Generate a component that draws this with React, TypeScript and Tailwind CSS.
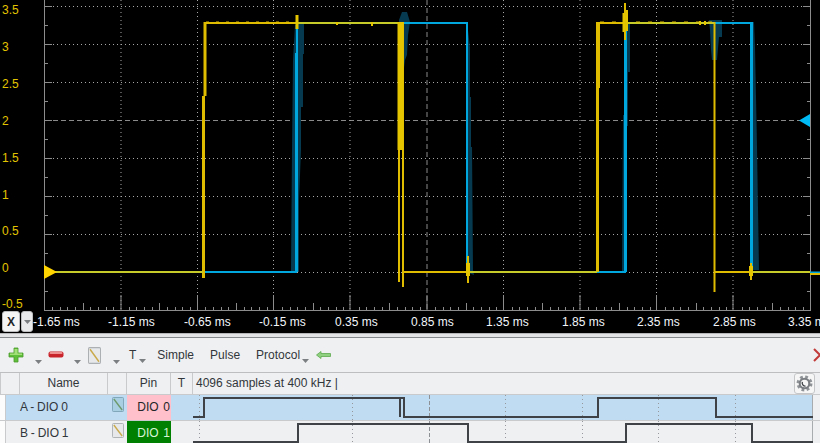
const gridX = [44.5, 121, 197.5, 273.5, 350, 427, 503.5, 580, 656.5, 733, 810.5];
const gridY = [6, 44, 82, 120, 158, 196, 234, 272, 310];

const xLabels = [
  ['-1.65 ms', 33],
  ['-1.15 ms', 108],
  ['-0.65 ms', 184],
  ['-0.15 ms', 259],
  ['0.35 ms', 335],
  ['0.85 ms', 411],
  ['1.35 ms', 486],
  ['1.85 ms', 562],
  ['2.35 ms', 637],
  ['2.85 ms', 713],
  ['3.35 ms', 788],
] as const;

const yLabels = [
  ['3.5', 14],
  ['3', 51],
  ['2.5', 88],
  ['2', 125],
  ['1.5', 162],
  ['1', 199],
  ['0.5', 235],
  ['0', 272],
  ['-0.5', 308],
] as const;

const ghosts = [
  '295,25 304,22 304,54 303,54 303,107 301,107 301,150 299,200 299,272 291,272 292,150 293,60',
  '399,20 402,12 407,12 410,22 408,35 407,55 405,60 404,68 400,68',
  '467,22 470,47 470,97 471,97 471,147 472,147 473,270 474,275 466,272',
  '626,22 630,22 630,72 628,72 628,126 627,126 627,272 622,272 623,115 624,115',
  '709,20 722,20 722,37 719,37 717,60 712,60 711,50 710,30',
  '750,22 754,22 755,47 756,97 757,147 759,270 750,270',
];

// x1, y1, x2, y2, width
const blueLines = [
  [203, 272, 297, 272, 2],
  [296.5, 272, 296.5, 53, 3],
  [297, 53, 297, 23, 2],
  [296, 23, 467, 23, 2],
  [467, 22, 467, 272, 2],
  [597, 272, 626, 272, 2],
  [625.5, 272, 625.5, 22, 3],
  [625, 23, 752, 23, 2],
  [751.5, 22, 751.5, 272, 3],
  [810, 272.5, 820, 272.5, 2],
];

const yellowLines = [
  [205, 22, 205, 96, 3],
  [203.5, 96, 203.5, 278, 3],
  [204, 23, 296, 23, 2],
  [399, 22, 399, 282, 2],
  [403, 22, 403, 287, 2],
  [403, 272, 468, 272, 2],
  [468, 256, 468, 283, 2],
  [597.5, 22, 597.5, 272, 3],
  [599, 22, 599, 88, 2],
  [597, 23, 625, 23, 2],
  [625, 3, 625, 40, 2],
  [714.5, 22, 714.5, 292, 2],
  [715, 272, 751, 272, 2],
  [751, 263, 751, 280, 2],
  [810, 274, 820, 274, 2],
];

const olive = [
  [44, 272, 203, 272],
  [298, 23, 398, 23],
  [468, 272, 597, 272],
  [628, 23, 714, 23],
  [751, 272, 810, 272],
];

const glitches = [
  [297, 15, 297, 29, 3],
  [337, 22, 337, 25, 2],
  [372, 22, 372, 26, 2],
  [624, 13, 624, 32, 3],
  [627, 10, 627, 31, 2],
  [468, 263, 468, 276, 4],
  [751, 266, 751, 276, 4],
  [400.5, 22, 400.5, 150, 6],
  [700, 21, 700, 25, 2],
  [705, 21, 705, 25, 2],
];

function Plot() {
  const minorX: number[] = [];
  for (let i = 0; i < 10; i++) {
    for (let j = 1; j < 10; j++) minorX.push(44.5 + i * 76.6 + (j * 76.6) / 10);
  }
  const minorY: number[] = [];
  for (let y = 25; y < 310; y += 38) minorY.push(y);

  return (
    <svg width="820" height="333" className="block">
      {gridY.slice(0, 8).map(y =>
        y === 120 ? (
          <line key={y} x1="45" y1={y + 0.5} x2="810" y2={y + 0.5} stroke="#8a8a8a" strokeDasharray="5 3" />
        ) : (
          <line key={y} x1="45" y1={y + 0.5} x2="810" y2={y + 0.5} stroke="#a8a8a8" strokeDasharray="1 3" />
        ),
      )}
      {gridX.slice(1, 10).map(x =>
        x === 427 ? (
          <line key={x} x1={x} y1="0" x2={x} y2="310" stroke="#8a8a8a" strokeDasharray="5 3" />
        ) : (
          <line key={x} x1={x} y1="0" x2={x} y2="310" stroke="#a8a8a8" strokeDasharray="1 3" />
        ),
      )}

      <line x1="44.5" y1="0" x2="44.5" y2="311" stroke="#8c8c8c" />
      <line x1="810.5" y1="0" x2="810.5" y2="311" stroke="#8c8c8c" />
      <line x1="44" y1="310.5" x2="811" y2="310.5" stroke="#8c8c8c" />
      {gridY.map(y => (
        <g key={y} stroke="#8c8c8c">
          <line x1="45" y1={y + 0.5} x2="52" y2={y + 0.5} />
          <line x1="803" y1={y + 0.5} x2="810" y2={y + 0.5} />
        </g>
      ))}
      {minorY.map(y => (
        <g key={y} stroke="#8c8c8c">
          <line x1="45" y1={y + 0.5} x2="48" y2={y + 0.5} />
          <line x1="807" y1={y + 0.5} x2="810" y2={y + 0.5} />
        </g>
      ))}
      {gridX.map(x => (
        <line key={x} x1={x} y1="295" x2={x} y2="310" stroke="#8c8c8c" />
      ))}
      {minorX.map((x, i) => (
        <line
          key={i}
          x1={Math.round(x) + 0.5}
          y1={i % 9 === 4 ? 303 : 307}
          x2={Math.round(x) + 0.5}
          y2="310"
          stroke="#8c8c8c"
        />
      ))}

      {ghosts.map((p, i) => (
        <polygon key={i} points={p} fill="#053a50" />
      ))}
      {blueLines.map((l, i) => (
        <line key={i} x1={l[0]} y1={l[1]} x2={l[2]} y2={l[3]} stroke="#00a6de" strokeWidth={l[4]} />
      ))}
      {yellowLines.map((l, i) => (
        <line key={i} x1={l[0]} y1={l[1]} x2={l[2]} y2={l[3]} stroke="#dfbc00" strokeWidth={l[4]} />
      ))}
      {olive.map((l, i) => (
        <line key={i} x1={l[0]} y1={l[1]} x2={l[2]} y2={l[3]} stroke="#c6cb2a" strokeWidth="2" />
      ))}
      <line x1="206" y1="22" x2="296" y2="22" stroke="#dfbc00" strokeDasharray="3 7" />
      <line x1="600" y1="22" x2="714" y2="22" stroke="#dfbc00" strokeDasharray="4 8" />
      {glitches.map((l, i) => (
        <line key={i} x1={l[0]} y1={l[1]} x2={l[2]} y2={l[3]} stroke="#e5c400" strokeWidth={l[4]} />
      ))}

      <polygon points="44,265 57,272 44,279" fill="#ffd400" />
      <polygon points="810,114 799,120.5 810,127" fill="#00baf5" />

      {yLabels.map(([t, y]) => (
        <text key={t} x="2" y={y} fontSize="12" fill="#e3c400">
          {t}
        </text>
      ))}
      {xLabels.map(([t, x]) => (
        <text key={t} x={x} y="326" fontSize="12" fill="#f2f6fa">
          {t}
        </text>
      ))}
    </svg>
  );
}

function MenuArrow({ className = '' }: { className?: string }) {
  return (
    <svg width="7" height="4" viewBox="0 0 7 4" className={className}>
      <polygon points="0,0 7,0 3.5,4" fill="#7c7f82" />
    </svg>
  );
}

function PlusIcon() {
  return (
    <svg width="16" height="16" viewBox="0 0 16 16">
      <path d="M6 1h4v5h5v4h-5v5H6v-5H1V6h5z" fill="#5fbf3a" stroke="#4a9a2c" strokeWidth="0.8" />
      <path d="M6.5 2h3v4.500h4.500v1.500H2V6.500h4.500z" fill="#a4e07a" />
    </svg>
  );
}

function MinusIcon() {
  return (
    <svg width="16" height="7" viewBox="0 0 16 7">
      <rect x="0.500" y="0.500" width="15" height="6" rx="2" fill="#c9242b" />
      <rect x="1.500" y="1" width="13" height="2" rx="1" fill="#ee8f8f" />
    </svg>
  );
}

function RulerIcon({ tint = false, size = 13, tall = 15 }: { tint?: boolean; size?: number; tall?: number }) {
  return (
    <svg width={size} height={tall} viewBox="0 0 13 15" preserveAspectRatio="none">
      <rect
        x="0.500"
        y="0.500"
        width="12"
        height="14"
        rx="1"
        fill={tint ? '#a9cfe2' : '#e6e8ea'}
        stroke={tint ? '#7fa4b8' : '#adb0b3'}
      />
      <line x1="2" y1="2" x2="11" y2="13" stroke={tint ? '#6d9a6a' : '#c9a94a'} strokeWidth="1.500" />
    </svg>
  );
}

function GearIcon() {
  return (
    <svg width="17" height="17" viewBox="0 0 16 16">
      <circle cx="8" cy="8" r="6" fill="none" stroke="#8f9397" strokeWidth="3" strokeDasharray="2.500 2.200" />
      <circle cx="8" cy="8" r="4.500" fill="none" stroke="#7b7f83" strokeWidth="2" />
      <path d="M6 6.500a3 3 0 0 0 3 4" fill="none" stroke="#3d4145" strokeWidth="1.200" />
    </svg>
  );
}

const waveGrid = [199, 352, 429, 505, 582, 658, 735];

function Wave({ points, height }: { points: string; height: number }) {
  return (
    <svg width="620" height={height} className="block shrink-0">
      {waveGrid.map(x => (
        <line
          key={x}
          x1={x - 193 + 0.5}
          y1="0"
          x2={x - 193 + 0.5}
          y2={height}
          stroke={x === 429 ? '#8d9094' : '#94979b'}
          strokeDasharray={x === 429 ? '4 2' : '1 3'}
        />
      ))}
      <polyline points={points} fill="none" stroke="#3f4347" strokeWidth="2" />
    </svg>
  );
}

function SignalRow({
  name,
  pin,
  pinClass,
  rowClass,
  tint,
  height,
  points,
}: {
  name: string;
  pin: string;
  pinClass: string;
  rowClass: string;
  tint?: boolean;
  height: number;
  points: string;
}) {
  return (
    <div className="flex border-b border-[#c8cacc]" style={{ height: height + 1 }}>
      <div className="w-[5px] shrink-0 bg-[#fcfcfc]" />
      <div className={`flex w-[808px] shrink-0 border-r border-[#a9acaf] ${rowClass}`}>
        <div className="w-[15px] shrink-0 border-l border-[#c8cacc]" />
        <div className="w-[88px] shrink-0 leading-[24px] [word-spacing:-0.5px]">{name}</div>
        <div className="w-[19px] shrink-0 pl-[4px] pt-[2px]">
          <RulerIcon tint={tint} size={12} tall={15} />
        </div>
        <div className={`w-[44px] shrink-0 whitespace-pre pr-px text-right leading-[25px] [word-spacing:-1px] ${pinClass}`}>
          {pin}
        </div>
        <div className="w-[22px] shrink-0" />
        <Wave points={points} height={height} />
      </div>
    </div>
  );
}

export default function App() {
  return (
    <div className="h-[443px] w-[820px] overflow-hidden bg-[#eff0f1] font-['Liberation_Sans',sans-serif] text-[12px] text-[#31363b]">
      <div className="relative h-[333px] bg-black">
        <Plot />
        <div className="absolute bottom-px left-[2px] flex h-[21px]">
          <div className="flex w-[18px] items-center justify-center rounded-[3px] border border-[#bdbfc1] bg-[#f5f5f5] text-[12px] font-bold text-[#232629]">
            X
          </div>
          <div className="ml-px flex w-[12px] items-center justify-center rounded-[3px] border border-[#bdbfc1] bg-[#e9eaeb]">
            <MenuArrow />
          </div>
        </div>
      </div>

      <div className="h-[5px] border-t border-[#b5b7b9] border-b border-b-[#85888b] bg-[#e3e4e5]" />

      <div className="relative flex h-[35px] items-center border-b border-[#bcbec0] pl-[8px]">
        <PlusIcon />
        <MenuArrow className="ml-[11px] mt-[13px]" />
        <div className="ml-[6px] -mt-px">
          <MinusIcon />
        </div>
        <MenuArrow className="ml-[10px] mt-[13px]" />
        <div className="ml-[7px]">
          <RulerIcon size={13} tall={17} />
        </div>
        <MenuArrow className="ml-[12px] mt-[13px]" />
        <span className="ml-[9px]">T</span>
        <MenuArrow className="ml-[3px] mt-[11px]" />
        <span className="ml-[11px]">Simple</span>
        <span className="ml-[16px]">Pulse</span>
        <span className="ml-[16px]">Protocol</span>
        <MenuArrow className="ml-[2px] mt-[11px]" />
        <svg width="15" height="8" viewBox="0 0 15 8" className="ml-[7px]">
          <path d="M0.500 4L5 0.500v2h9.500v3H5v2z" fill="#8fd080" stroke="#5ca84e" strokeWidth="0.800" />
        </svg>
        <svg width="8" height="14" viewBox="0 0 8 14" className="absolute left-[813px] top-[10px]">
          <path d="M1 1l6 6M1 13l6-6" stroke="#c23b3b" strokeWidth="2" fill="none" />
        </svg>
      </div>

      <div className="flex h-[22px] border-b border-[#c8cacc] leading-[21px]">
        <div className="w-[20px] shrink-0 border-x border-[#c8cacc] bg-[#eff0f1]" />
        <div className="w-[88px] shrink-0 border-r border-[#c8cacc] text-center">Name</div>
        <div className="w-[19px] shrink-0 border-r border-[#c8cacc]" />
        <div className="w-[44px] shrink-0 border-r border-[#c8cacc] text-center">Pin</div>
        <div className="w-[22px] shrink-0 border-r border-[#c8cacc] text-center">T</div>
        <div className="flex min-w-0 flex-1 pl-[3px]">
          <span>4096 samples at 400 kHz |</span>
          <div className="ml-auto mr-[5px] flex h-[21px] w-[21px] items-center justify-center rounded-[3px] border border-[#c4c6c8] bg-[#f6f6f6]">
            <GearIcon />
          </div>
        </div>
      </div>

      <SignalRow
        name="A - DIO 0"
        pin="DIO  0"
        pinClass="bg-[#ffc0cb] text-[#232629]"
        rowClass="bg-[#c0dcf3]"
        tint
        height={25}
        points="0,22 11,22 11,3 207,3 207,22 207,3 211,3 211,22 405,22 405,3 523,3 523,22 620,22"
      />
      <SignalRow
        name="B - DIO 1"
        pin="DIO  1"
        pinClass="bg-[#008000] text-[#d6f5d6]"
        rowClass="bg-[#eff0f1]"
        height={22}
        points="0,21 105,21 105,3 275,3 275,21 433,21 433,3 559,3 559,21 620,21"
      />
    </div>
  );
}
